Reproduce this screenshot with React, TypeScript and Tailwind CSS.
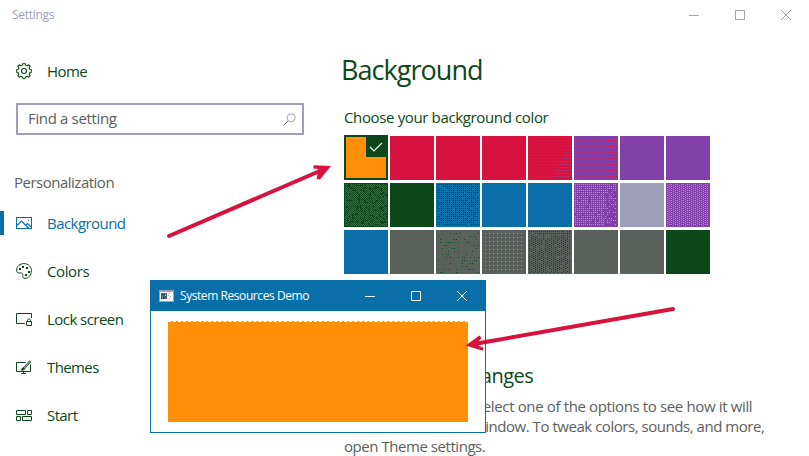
import React from "react";

const green = "#0b4718";

const GearIcon = () => {
  const points: string[] = [];
  for (let i = 0; i < 8; i++) {
    const step: [number, number][] = [[-15, 7.8], [-9, 6.1], [9, 6.1], [15, 7.8]];
    step.forEach(([offset, radius]) => {
      const angle = ((i * 45 + 22.5 + offset) * Math.PI) / 180;
      points.push(`${8 + radius * Math.cos(angle)},${8 + radius * Math.sin(angle)}`);
    });
  }
  return (
    <svg width="16" height="16" viewBox="0 0 16 16" fill="none" stroke={green} strokeWidth="1.1">
      <polygon points={points.join(" ")} strokeLinejoin="round" />
      <circle cx="8" cy="8" r="2.5" />
    </svg>
  );
};

const PictureIcon = () => (
  <svg width="16" height="12" viewBox="0 0 16 12" fill="none" stroke="#0a6fa8">
    <rect x="0.5" y="0.5" width="15" height="11" />
    <path d="M1 8.500 5.500 4 13 11.500M9.500 8 11.500 6.500 15 10" strokeWidth="1.2" />
    <path d="M12 3h1v1h-1z" fill="#0a6fa8" stroke="none" />
  </svg>
);

const PaletteIcon = () => (
  <svg width="16" height="16" viewBox="0 0 16 16" fill="none" stroke={green}>
    <path d="M.6 7C.8 3.200 4 .6 8 .6c4.200 0 7.400 3 7.400 7.200 0 4.400-3 7.600-6.400 7.600-3 0-2-2.400-2.200-3.800C6.600 10 5.500 9.600 4.300 10 2.300 10.500.5 9.500.6 7Z" />
    <path d="M3 5h2v2H3zM6 3h2v2H6zM10 4h2v2h-2zM12 8h2v2h-2zM9 11h2v2H9z" fill={green} stroke="none" />
  </svg>
);

const LockIcon = () => (
  <svg width="16" height="13" viewBox="0 0 16 13" fill="none" stroke={green}>
    <path d="M9 10.500H.5V.5h15V5M10.500 8.500h5v4h-5zM11.500 8.500v-1c0-2.200 3-2.200 3 0v1" />
  </svg>
);

const ThemeIcon = () => (
  <svg width="16" height="14" viewBox="0 0 16 14" fill="none" stroke={green}>
    <path d="M9.500 2.500H.5v9h14v-7M7.500 11.500v2M5 13.500h5" />
    <path d="m7 8 6.500-7 1.200 1L8.500 9Z" fill="#9aa39c" strokeWidth=".8" />
    <path d="M7 7.800 8.500 9c-.5 1.500-2.500 1.600-3.700.9C6 9.500 5.700 8 7 7.800Z" fill={green} strokeWidth=".6" />
  </svg>
);

const StartIcon = () => (
  <svg width="16" height="11" viewBox="0 0 16 11" fill="none" stroke={green}>
    <path d="M.5.5h9v4h-9zM11.500.5h4v4h-4zM.5 6.500h4v4h-4zM6.500 6.500h9v4h-9z" />
  </svg>
);

type NavProps = { icon: React.ReactNode; label: string; fit: string; active?: boolean };

const NavItem = ({ icon, label, fit, active }: NavProps) => (
  <div className={"flex h-12 items-center " + (active ? "text-[#0a6fa8]" : "text-[#0b4718]")}>
    <span className={"h-6 w-1 " + (active ? "bg-[#0a6fa8]" : "")} />
    <span className="ml-3 flex w-4 justify-start">{icon}</span>
    <span className={"ml-[15px] whitespace-nowrap text-[15px] leading-5 " + fit}>{label}</span>
  </div>
);

type Kind = "redDots" | "purpleDots" | "greenMix" | "blueMix" | "blueSparse" | "violetMix" | "violetGray" | "graySparse" | "grayLight" | "grayGreen";

/* Decides which dither colour, if any, lands on a pixel of a swatch. */
const dot = (kind: Kind, x: number, y: number): string | null => {
  const band = Math.floor(y / 3);
  const noise = Math.sin(x * 12.9898 + y * 78.233) * 43758.5453;
  const hash = Math.floor((noise - Math.floor(noise)) * 101);
  const inside = x > 0 && y > 0 && x < 43 && y < 43;
  if (!inside) return null;
  switch (kind) {
    case "redDots":
      if (y % 3 !== 1) return null;
      if (x + y * 0.5 > 44) return x % 2 === band % 2 ? "#8440aa" : "#b02a66";
      return (x + band) % 2 === 0 ? "#b02a66" : null;
    case "purpleDots":
      return y % 3 === 1 && (x + band * 2) % (x > 34 ? 2 : 4) === 0 ? "#c01c58" : null;
    case "greenMix":
      return (x + y) % 2 === 0 && hash < 82 ? (hash % 4 === 0 ? "#0a6fa8" : "#5a605c") : null;
    case "blueMix":
      return x % 2 === 1 && y % 2 === 1 ? (hash > 86 ? "#5a605c" : green) : null;
    case "blueSparse":
      return y % 3 === 1 && (x + (band % 2) * 2) % 4 === 1 ? "#5a605c" : null;
    case "violetMix":
      return x % 2 === 1 && y % 2 === 1 ? (hash > 94 || (x + 4 > 34 && y > 5 && hash > 50) ? "#0a6fa8" : "#9f9fba") : null;
    case "violetGray":
      return (y + (Math.floor(x / 2) % 3 === 0 ? 1 : 0)) % 2 === 1 && x % 2 === 1 ? "#9f9fba" : null;
    case "graySparse":
      return y % 3 === 0 && x % 2 === 0 && hash < 26 ? green : null;
    case "grayLight":
      return x % 4 === 3 && y % 4 === 3 && x < 41 && y < 41 ? "#9f9fba" : null;
    case "grayGreen":
      return x % 2 === 1 && (y + (y > 4 && Math.floor(x / 2) % 2 === 0 ? 1 : 0)) % 2 === 1 && hash < 88 ? green : null;
  }
};

const Dither = ({ kind }: { kind: Kind }) => {
  const paths: Record<string, string> = {};
  for (let y = 0; y < 44; y++)
    for (let x = 0; x < 44; x++) {
      const color = dot(kind, x, y);
      if (color) paths[color] = (paths[color] || "") + `M${x} ${y}h1v1h-1z`;
    }
  return (
    <svg width="44" height="44" viewBox="0 0 44 44" shapeRendering="crispEdges">
      {Object.entries(paths).map(([color, d]) => <path key={color} d={d} fill={color} />)}
    </svg>
  );
};

const swatches: { bg: string; kind?: Kind }[] = [
  { bg: "bg-[#ff8f07]" },
  { bg: "bg-[#d8123f]" },
  { bg: "bg-[#d8123f]" },
  { bg: "bg-[#d8123f]" },
  { bg: "bg-[#d8123f]", kind: "redDots" },
  { bg: "bg-[#8440aa]", kind: "purpleDots" },
  { bg: "bg-[#8440aa]" },
  { bg: "bg-[#8440aa]" },
  { bg: "bg-[#0b4718]", kind: "greenMix" },
  { bg: "bg-[#0b4718]" },
  { bg: "bg-[#0a6fa8]", kind: "blueMix" },
  { bg: "bg-[#0a6fa8]", kind: "blueSparse" },
  { bg: "bg-[#0a6fa8]" },
  { bg: "bg-[#8440aa]", kind: "violetMix" },
  { bg: "bg-[#9f9fba]" },
  { bg: "bg-[#8440aa]", kind: "violetGray" },
  { bg: "bg-[#0a6fa8]" },
  { bg: "bg-[#5a605c]" },
  { bg: "bg-[#5a605c]", kind: "graySparse" },
  { bg: "bg-[#5a605c]", kind: "grayLight" },
  { bg: "bg-[#5a605c]", kind: "grayGreen" },
  { bg: "bg-[#5a605c]" },
  { bg: "bg-[#5a605c]" },
  { bg: "bg-[#0b4718]" },
];

const SelectedSwatch = () => (
  <div className="-mt-px flex h-[45px] w-11 justify-end border-2 border-[#0b4718] bg-[#ff8f07]">
    <div className="flex h-5 w-5 items-center justify-center bg-[#0b4718]">
      <svg width="14" height="10" viewBox="0 0 14 10" fill="none" stroke="#fff" strokeWidth="1.2">
        <path d="m1 5 4 4L13 .8" />
      </svg>
    </div>
  </div>
);

const WindowControls = ({ color, gap }: { color: string; gap: string }) => (
  <div className={"flex items-center " + gap}>
    <svg width="10" height="10" viewBox="0 0 10 10" stroke={color}><path d="M0 5.500h10" /></svg>
    <svg width="10" height="10" viewBox="0 0 10 10" fill="none" stroke={color}><path d="M.5.5h9v9h-9z" /></svg>
    <svg width="10" height="10" viewBox="0 0 10 10" stroke={color}><path d="m0 0 10 10M10 0 0 10" /></svg>
  </div>
);

const DemoWindow = () => (
  <div className="absolute left-[150px] top-[280px] flex h-[153px] w-[336px] flex-col border border-[#0a6fa8] bg-white">
    <div className="flex h-[30px] items-center bg-[#0a6fa8] pl-2 pr-[18px] text-white">
      <svg width="15" height="12" viewBox="0 0 15 12" shapeRendering="crispEdges">
        <path d="M0 0h15v12H0z" fill="#9f9fba" />
        <path d="M1 2h13v9H1z" fill="#fff" />
        <path d="M2 3h6v6H2z" fill="#5a605c" />
        <path d="M3 4h2v2H3zM5 6h2v2H5z" fill="#0a6fa8" />
        <path d="M5 4h1v1H5zM2 8h1v1H2zM4 7h1v2H4z" fill={green} />
        <path d="M6 4h1v2H6zM3 7h1v1H3zM10 3h1v1h-1zM9 5h1v1H9zM11 6h1v1h-1zM10 8h1v1h-1z" fill="#9f9fba" />
      </svg>
      <span className="ml-1.5 flex-1 whitespace-nowrap text-[12px] leading-4 tracking-[-0.43px]">System Resources Demo</span>
      <WindowControls color="#fff" gap="gap-9" />
    </div>
    <div className="ml-[17px] mt-[10px] h-[101px] w-[300px] border-t border-dashed border-white bg-[#ff8f07]" />
  </div>
);

const Arrows = () => (
  <svg className="pointer-events-none absolute inset-0" width="809" height="456" viewBox="0 0 809 456" fill="#d8123f" stroke="#d8123f">
    <path d="M169 236 321 170.500" fill="none" strokeWidth="4" strokeLinecap="round" />
    <path d="m331 166-17.500-.8-.2 3.300 5 .5-1 6.500-.8 3.500 3.500.5Z" stroke="none" />
    <path d="M673 309 477 343.500" fill="none" strokeWidth="4" strokeLinecap="round" />
    <path d="m465.500 345.500 14-10 2 2.500-4 4.500 1.500 3.500 4.500 1.500-.7 3.300Z" stroke="none" />
  </svg>
);

export default function App() {
  return (
    <div className="relative flex h-[456px] w-[809px] flex-col overflow-hidden bg-white font-['Open_Sans','Noto_Sans',sans-serif]">
      <header className="flex h-[30px] shrink-0 items-center justify-between pl-3 pr-[18px] text-[#9f9fba]">
        <span className="text-[12px] leading-4 tracking-[-0.3px]">Settings</span>
        <WindowControls color="#9f9fba" gap="gap-9" />
      </header>
      <div className="flex flex-1">
        <nav className="w-[342px] shrink-0 pt-[17px]">
          <NavItem icon={<GearIcon />} label="Home" fit="tracking-[-0.6px]" />
          <div className="ml-4 mt-2 flex h-8 w-72 items-center justify-between border-2 border-[#9f9fba] pl-[10px] pr-1.5">
            <span className="-mt-0.5 text-[15px] leading-5 tracking-[-0.35px] text-[#5a605c]">Find a setting</span>
            <svg width="13" height="13" viewBox="0 0 13 13" fill="none" stroke="#9f9fba">
              <circle cx="8.200" cy="4.800" r="4" />
              <path d="M5 8 .5 12.500" stroke="#5a605c" />
            </svg>
          </div>
          <div className="ml-[14px] mt-[37px] text-[15px] leading-5 tracking-[-0.5px] text-[#5a605c]">Personalization</div>
          <div className="mt-[7px]">
            <NavItem icon={<PictureIcon />} label="Background" fit="tracking-[-0.55px]" active />
            <NavItem icon={<PaletteIcon />} label="Colors" fit="tracking-[-0.4px]" />
            <NavItem icon={<LockIcon />} label="Lock screen" fit="tracking-[-0.55px]" />
            <NavItem icon={<ThemeIcon />} label="Themes" fit="tracking-[-0.6px]" />
            <NavItem icon={<StartIcon />} label="Start" fit="tracking-[-0.6px]" />
          </div>
        </nav>
        <main className="flex-1 pl-0.5 pt-[20px] text-[#0b4718]">
          <h1 className="-ml-[3px] text-[27px] font-normal leading-10 tracking-[-0.95px]">Background</h1>
          <h2 className="mt-[17px] text-[15px] leading-5 tracking-[-0.36px]">Choose your background color</h2>
          <div className="mt-[9px] grid w-[366px] grid-cols-[repeat(8,44px)] gap-x-0.5 gap-y-[3px]">
            {swatches.map(({ bg, kind }, i) =>
              i === 0 ? <SelectedSwatch key={i} /> : <div key={i} className={"h-11 w-11 " + bg}>{kind && <Dither kind={kind} />}</div>,
            )}
          </div>
          <h2 className="ml-[116px] mt-[88px] whitespace-nowrap text-[20px] leading-7 tracking-[-0.5px]">changes</h2>
          <div className="mt-[6px] whitespace-nowrap text-[15px] leading-5 text-[#5a605c]">
            <p className="ml-[132px] tracking-[-0.36px]">select one of the options to see how it will</p>
            <p className="ml-[130px] tracking-[-0.46px]">window. To tweak colors, sounds, and more,</p>
            <p className="tracking-[-0.45px]">open Theme settings.</p>
          </div>
        </main>
      </div>
      <DemoWindow />
      <Arrows />
    </div>
  );
}
